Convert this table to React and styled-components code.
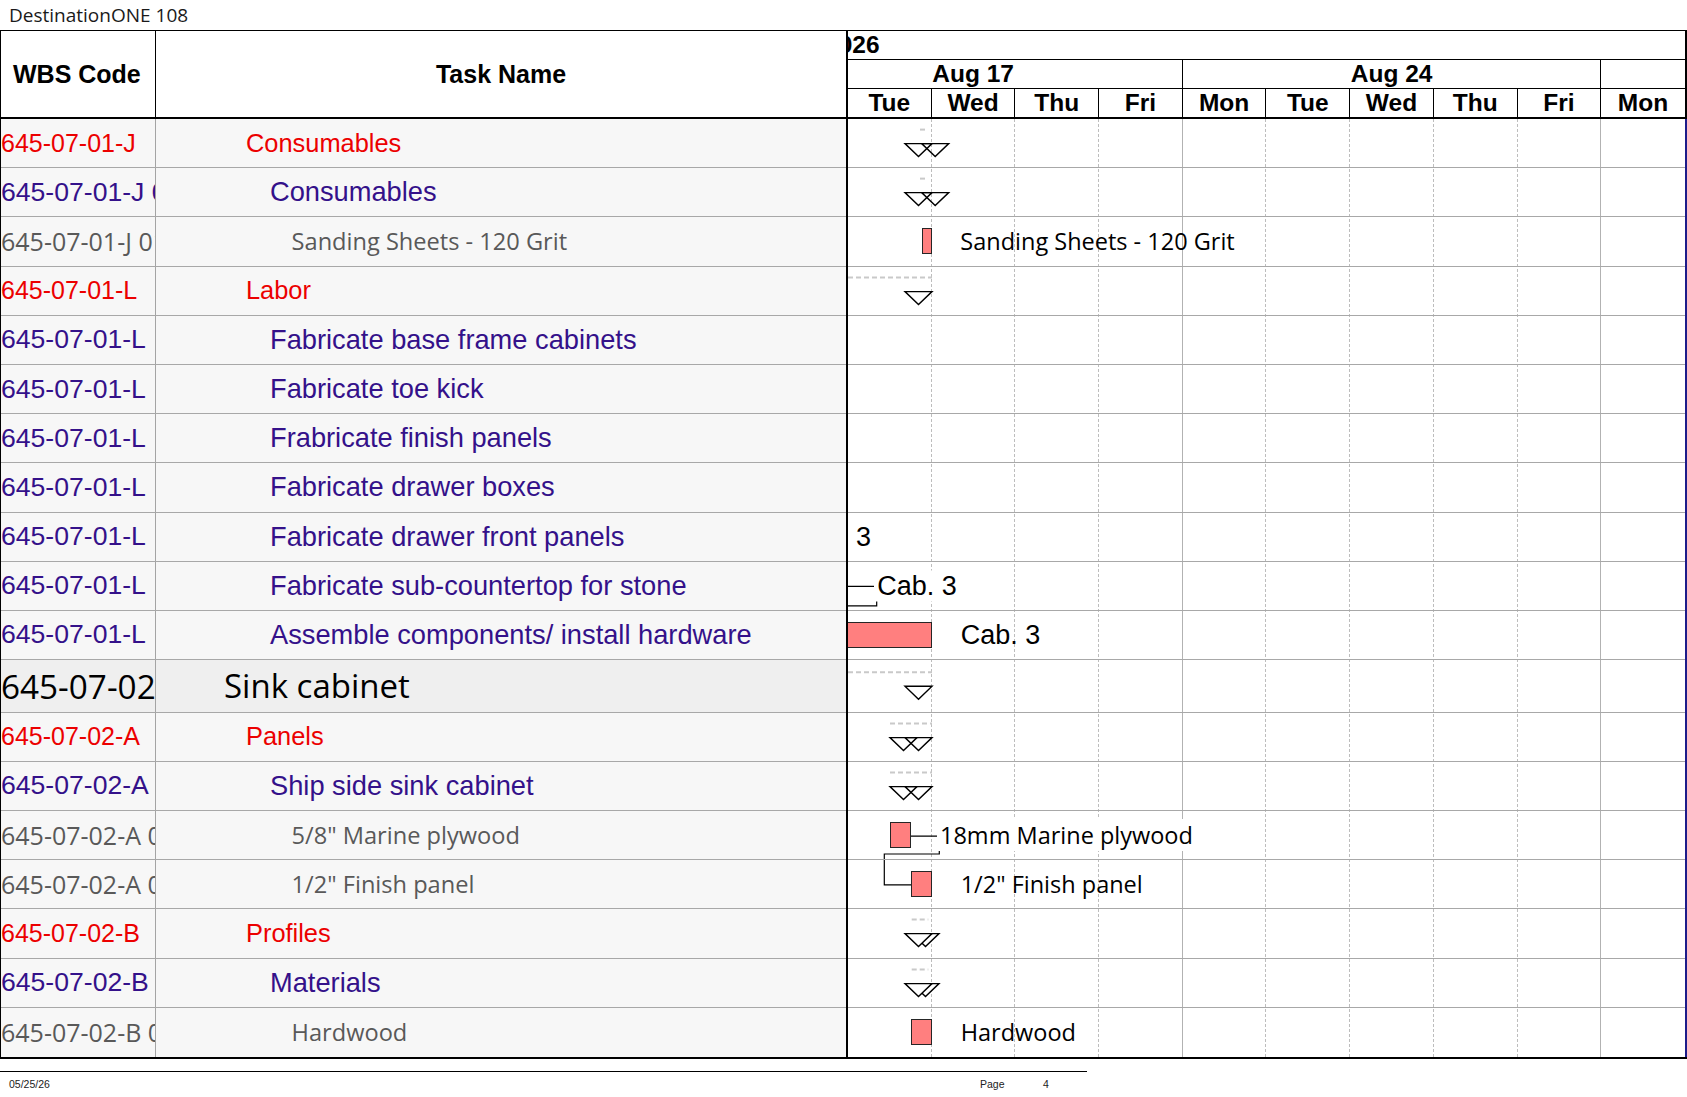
import React from 'react';
import styled, { createGlobalStyle } from 'styled-components';

// one working day on the timescale
const DAY = 83.7;
const ROW = 49.2;
const TALL_ROW = 52.5;

const ARIAL = '"Liberation Sans", Arial, sans-serif';
const SEGOE = '"Open Sans", "Noto Sans", sans-serif';

// outline levels: 0 = cabinet, 1 = group, 2 = task, 3 = material
const LEVELS = {
  0: { font: SEGOE, size: 33, wbsSize: 33.3, color: '#000', indent: 68 },
  1: { font: ARIAL, size: 25.4, wbsSize: 25, color: '#ec0000', indent: 90 },
  2: { font: ARIAL, size: 27.25, wbsSize: 26.6, color: '#34118a', indent: 114 },
  3: { font: SEGOE, size: 23.6, wbsSize: 25, color: '#595959', indent: 135.6 },
};

const consumablesMark = { dash: [72, 80], tris: [57, 73.7] };
const panelsMark = { dash: [42, 84], tris: [42, 57] };
const profilesMark = { dash: [63.7, 80.3], tris: [64, 57], filled: true };

const rows = [
  { wbs: '645-07-01-J', name: 'Consumables', level: 1, summary: consumablesMark },
  { wbs: '645-07-01-J 01', name: 'Consumables', level: 2, summary: consumablesMark },
  {
    wbs: '645-07-01-J 01', name: 'Sanding Sheets - 120 Grit', level: 3,
    bar: { x: 73.7, w: 10.6 }, label: { x: 112.3, text: 'Sanding Sheets - 120 Grit' },
  },
  { wbs: '645-07-01-L', name: 'Labor', level: 1, summary: { dash: [0, 84], tris: [57] } },
  { wbs: '645-07-01-L', name: 'Fabricate base frame cabinets', level: 2 },
  { wbs: '645-07-01-L', name: 'Fabricate toe kick', level: 2 },
  { wbs: '645-07-01-L', name: 'Frabricate finish panels', level: 2 },
  { wbs: '645-07-01-L', name: 'Fabricate drawer boxes', level: 2 },
  {
    wbs: '645-07-01-L', name: 'Fabricate drawer front panels', level: 2,
    label: { x: -56.5, text: 'Cab. 3', arial: true },
  },
  {
    wbs: '645-07-01-L', name: 'Fabricate sub-countertop for stone', level: 2,
    label: { x: 29.3, text: 'Cab. 3', arial: true, cover: true },
  },
  {
    wbs: '645-07-01-L', name: 'Assemble components/ install hardware', level: 2,
    bar: { x: -2, w: 85.7 }, label: { x: 112.7, text: 'Cab. 3', arial: true },
  },
  { wbs: '645-07-02', name: 'Sink cabinet', level: 0, tall: true, summary: { dash: [0, 84], tris: [57] } },
  { wbs: '645-07-02-A', name: 'Panels', level: 1, summary: panelsMark },
  { wbs: '645-07-02-A', name: 'Ship side sink cabinet', level: 2, summary: panelsMark },
  {
    wbs: '645-07-02-A 01', name: '5/8" Marine plywood', level: 3,
    bar: { x: 42, w: 20.7 }, label: { x: 92, text: '18mm Marine plywood', cover: true },
  },
  {
    wbs: '645-07-02-A 02', name: '1/2" Finish panel', level: 3,
    bar: { x: 63, w: 20.7 }, label: { x: 112.7, text: '1/2" Finish panel' },
  },
  { wbs: '645-07-02-B', name: 'Profiles', level: 1, summary: profilesMark },
  { wbs: '645-07-02-B', name: 'Materials', level: 2, summary: profilesMark },
  {
    wbs: '645-07-02-B 01', name: 'Hardwood', level: 3,
    bar: { x: 63, w: 20.7 }, label: { x: 112.7, text: 'Hardwood' },
  },
];

// dependency lines, in canvas coordinates
const links = [
  'M0 467.4 H28.7 V486.9 H0',
  'M62.7 717.2 H91.3 V735 H36.3 V765.9 H63',
];

const weeks = [
  { label: 'Aug 17', days: 5 },
  { label: 'Aug 24', days: 5 },
  { label: '', days: 5 },
];

const days = ['Tue', 'Wed', 'Thu', 'Fri', 'Mon', 'Tue', 'Wed', 'Thu', 'Fri', 'Mon'];

const GlobalStyle = createGlobalStyle`
  html, body {
    margin: 0;
    padding: 0;
    background: #fff;
  }
  body {
    font-family: ${ARIAL};
  }
`;

const SummaryMark = ({ mark, height }) => {
  const top = height / 2;
  const tris = mark.tris.map((x) => `${x},${top} ${x + 27},${top} ${x + 13.5},${top + 13}`);
  return (
    <MarkSvg>
      <line
        x1={mark.dash[0]}
        x2={mark.dash[1]}
        y1={top - 14}
        y2={top - 14}
        stroke="#c9c9c9"
        strokeWidth="2"
        strokeDasharray="5 3"
      />
      {tris.map((points, i) => (
        <polygon
          key={i}
          points={points}
          fill={mark.filled ? '#fff' : 'none'}
          stroke="#000"
          strokeWidth="1.4"
        />
      ))}
    </MarkSvg>
  );
};

const App = () => {
  return (
    <Sheet>
      <GlobalStyle />
      <Title>DestinationONE 108</Title>
      <Board>
        <TablePane>
          <TableHead>
            <HeadCell $divider>WBS Code</HeadCell>
            <HeadCell $center>Task Name</HeadCell>
          </TableHead>
          {rows.map((row, i) => (
            <TableRow key={i} $tall={row.tall}>
              <WbsCell $level={row.level}>{row.wbs}</WbsCell>
              <NameCell $level={row.level}>{row.name}</NameCell>
            </TableRow>
          ))}
        </TablePane>

        <GanttPane>
          <Tier $border={1}>
            <YearLabel>2026</YearLabel>
          </Tier>
          <Tier $border={1}>
            <WeekStrip>
              {weeks.map((w, i) => (
                <WeekCell key={i} $days={w.days}>{w.label}</WeekCell>
              ))}
            </WeekStrip>
          </Tier>
          <Tier $border={2}>
            {days.map((d, i) => (
              <DayCell key={i}>{d}</DayCell>
            ))}
          </Tier>

          <Canvas>
            <GridLayer>
              {days.map((d, i) => (
                <GridColumn key={i} $weekEnd={d === 'Fri'} />
              ))}
            </GridLayer>
            <LinkLayer>
              {links.map((d, i) => (
                <path key={i} d={d} fill="none" stroke="#000" strokeWidth="1.2" />
              ))}
            </LinkLayer>
            <GanttRows>
              {rows.map((row, i) => (
                <GanttRow key={i} $tall={row.tall}>
                  {row.summary && (
                    <SummaryMark mark={row.summary} height={row.tall ? TALL_ROW : ROW} />
                  )}
                  {row.bar && <Bar style={{ left: row.bar.x, width: row.bar.w }} />}
                  {row.label && (
                    <BarLabel
                      $arial={row.label.arial}
                      $cover={row.label.cover}
                      style={{ left: row.label.x - (row.label.cover ? 3 : 0) }}
                    >
                      {row.label.text}
                    </BarLabel>
                  )}
                </GanttRow>
              ))}
            </GanttRows>
          </Canvas>
        </GanttPane>
      </Board>
      <Footer>
        <span>05/25/26</span>
        <span>Page</span>
        <span>4</span>
      </Footer>
    </Sheet>
  );
};

export default App;

// Styled-components
const Sheet = styled.div`
  width: 1687px;
  display: flex;
  flex-direction: column;
`;

const Title = styled.div`
  height: 30px;
  padding-left: 9px;
  font: 400 19px/30px ${SEGOE};
  color: #1a1a1a;
`;

const Board = styled.div`
  display: flex;
  border-top: 1px solid #000;
  border-bottom: 2px solid #000;
`;

const TablePane = styled.div`
  width: 848px;
  flex: none;
  box-sizing: border-box;
  border-left: 1px solid #000;
  border-right: 2px solid #000;
`;

const TableHead = styled.div`
  display: grid;
  grid-template-columns: 155px 1fr;
  height: 88px;
  box-sizing: border-box;
  border-bottom: 2px solid #000;
`;

const HeadCell = styled.div`
  display: flex;
  align-items: center;
  justify-content: ${(p) => (p.$center ? 'center' : 'flex-start')};
  padding-left: ${(p) => (p.$center ? 0 : 12)}px;
  font: bold 25px ${ARIAL};
  color: #000;
  border-right: ${(p) => (p.$divider ? '1px solid #000' : 'none')};
`;

const TableRow = styled.div`
  display: grid;
  grid-template-columns: 155px 1fr;
  height: ${(p) => (p.$tall ? TALL_ROW : ROW)}px;
  box-sizing: border-box;
  background: ${(p) => (p.$tall ? '#efefef' : '#f7f7f7')};
  border-bottom: 1px solid #a8a8a8;

  &:last-child {
    border-bottom: none;
  }
`;

const WbsCell = styled.div`
  display: flex;
  align-items: center;
  overflow: hidden;
  white-space: nowrap;
  border-right: 1px solid #a4a4a4;
  font-family: ${(p) => LEVELS[p.$level].font};
  font-size: ${(p) => LEVELS[p.$level].wbsSize}px;
  color: ${(p) => LEVELS[p.$level].color};
`;

const NameCell = styled.div`
  display: flex;
  align-items: center;
  overflow: hidden;
  white-space: nowrap;
  padding-left: ${(p) => LEVELS[p.$level].indent}px;
  font-family: ${(p) => LEVELS[p.$level].font};
  font-size: ${(p) => LEVELS[p.$level].size}px;
  color: ${(p) => LEVELS[p.$level].color};
`;

const GanttPane = styled.div`
  width: 839px;
  flex: none;
  display: flex;
  flex-direction: column;
`;

const Tier = styled.div`
  height: ${(p) => 28 + p.$border}px;
  box-sizing: border-box;
  display: flex;
  overflow: hidden;
  border-bottom: ${(p) => p.$border}px solid #000;
  border-right: 2px solid #000;
  font: bold 24.5px/28px ${ARIAL};
  color: #000;
`;

const YearLabel = styled.div`
  margin-left: -23px;
  white-space: nowrap;
`;

// the timescale is scrolled so that Monday Aug 17 sits just off the left edge
const WeekStrip = styled.div`
  display: flex;
  flex: none;
  margin-left: -${DAY}px;
`;

const WeekCell = styled.div`
  flex: none;
  width: ${(p) => p.$days * DAY}px;
  box-sizing: border-box;
  text-align: center;
  border-right: 1px solid #000;
`;

const DayCell = styled.div`
  flex: none;
  width: ${DAY}px;
  box-sizing: border-box;
  text-align: center;
  border-right: 1px solid #000;

  &:last-child {
    border-right: none;
  }
`;

const Canvas = styled.div`
  position: relative;
  overflow: hidden;
  background: #fff;
  border-right: 2px solid #1c1c8a;
`;

const GridLayer = styled.div`
  position: absolute;
  inset: 0;
  display: flex;
`;

const GridColumn = styled.div`
  flex: 0 0 ${DAY}px;
  box-sizing: border-box;
  border-right: 1px ${(p) => (p.$weekEnd ? 'solid #b2b2b2' : 'dashed #bdbdbd')};

  &:last-child {
    border-right: none;
  }
`;

const LinkLayer = styled.svg`
  position: absolute;
  inset: 0;
  width: 100%;
  height: 100%;
`;

const GanttRows = styled.div`
  position: relative;
  display: flex;
  flex-direction: column;
`;

const GanttRow = styled.div`
  position: relative;
  height: ${(p) => (p.$tall ? TALL_ROW : ROW)}px;
  box-sizing: border-box;
  border-bottom: 1px solid #a8a8a8;

  &:last-child {
    border-bottom: none;
  }
`;

const MarkSvg = styled.svg`
  position: absolute;
  left: 0;
  top: 0;
  width: 100%;
  height: 100%;
  overflow: visible;
`;

const Bar = styled.div`
  position: absolute;
  top: 50%;
  height: 26px;
  margin-top: -13px;
  box-sizing: border-box;
  background: #ff7f7f;
  border: 1px solid #262626;
`;

const BarLabel = styled.div`
  position: absolute;
  top: 50%;
  transform: translateY(-50%);
  white-space: nowrap;
  padding-left: ${(p) => (p.$cover ? 3 : 0)}px;
  padding-right: ${(p) => (p.$cover ? 2 : 0)}px;
  background: ${(p) => (p.$cover ? '#fff' : 'transparent')};
  font-family: ${(p) => (p.$arial ? ARIAL : SEGOE)};
  font-size: ${(p) => (p.$arial ? 27 : 23.5)}px;
  color: #000;
`;

const Footer = styled.div`
  margin-top: 12px;
  width: 1087px;
  box-sizing: border-box;
  border-top: 1.5px solid #000;
  padding: 6px 0 0 9px;
  display: grid;
  grid-template-columns: 971px 63px auto;
  font: 10.5px ${ARIAL};
  color: #222;
`;
